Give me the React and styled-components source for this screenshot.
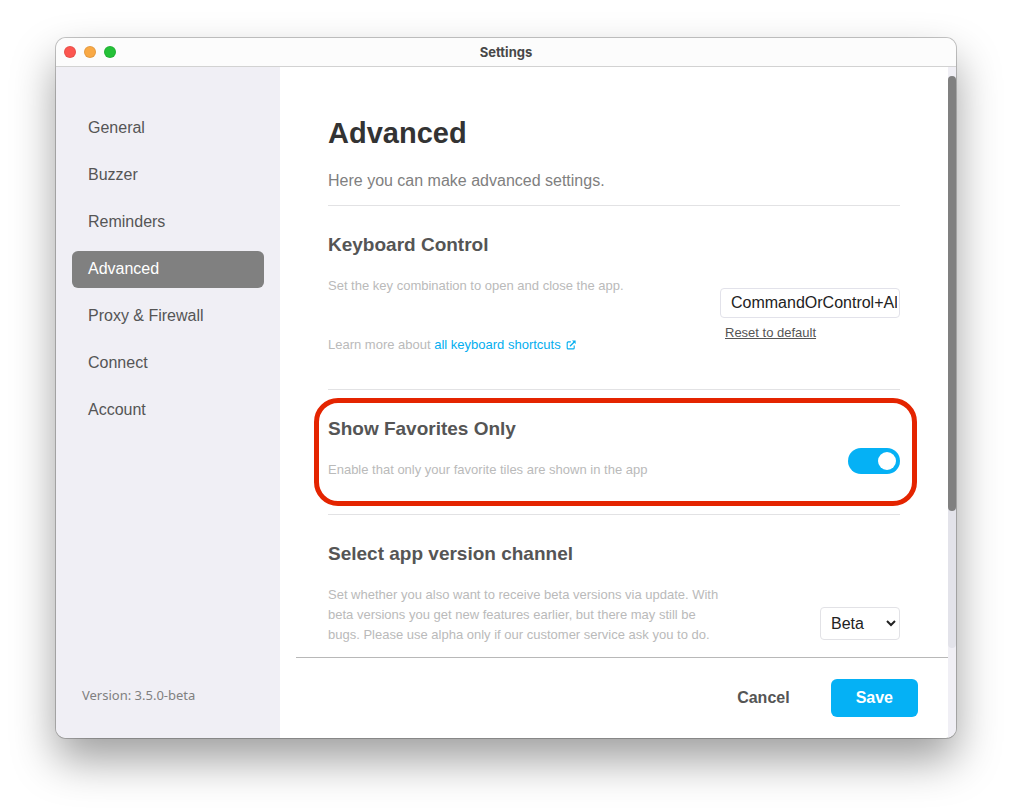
import React, { useState } from 'react'
import styled, { createGlobalStyle } from 'styled-components'

const GlobalStyle = createGlobalStyle`
  * {
    box-sizing: border-box;
  }
  body {
    margin: 0;
    background: #fff;
    font-family: 'Liberation Sans', Arial, sans-serif;
    font-size: 16px;
    color: #555;
  }
  button, input, select {
    font-family: inherit;
    font-size: inherit;
  }
`

const Desktop = styled.div`
  display: flex;
  height: 100vh;
  padding: 38px 56px 74px;
`

const Window = styled.div`
  flex: 1;
  display: flex;
  flex-direction: column;
  min-width: 0;
  overflow: hidden;
  background: #fff;
  border-radius: 10px;
  box-shadow: 0 0 0 1px rgba(0, 0, 0, 0.22), 0 22px 44px rgba(0, 0, 0, 0.38);
`

const TitleBar = styled.header`
  display: grid;
  grid-template-columns: 1fr auto 1fr;
  align-items: center;
  height: 29px;
  padding: 0 8px;
  background: #fcfcfc;
  border-bottom: 1px solid #d2d2d2;
`

const Lights = styled.div`
  display: flex;
  gap: 8px;
`

const Light = styled.button`
  width: 12px;
  height: 12px;
  padding: 0;
  border: 1px solid rgba(0, 0, 0, 0.08);
  border-radius: 50%;
  background: ${props => props.$color};
`

const WindowTitle = styled.div`
  font-family: Inter, sans-serif;
  font-size: 13px;
  font-weight: 700;
  line-height: 16px;
  color: #484848;
`

const Body = styled.div`
  flex: 1;
  display: grid;
  grid-template-columns: 224px 1fr 8px;
  min-height: 0;
`

const Sidebar = styled.aside`
  display: flex;
  flex-direction: column;
  justify-content: space-between;
  padding: 43px 16px 33px;
  background: #f0eff5;
`

const Nav = styled.nav`
  display: flex;
  flex-direction: column;
  gap: 10px;
`

const NavItem = styled.a`
  padding: 8px 16px 9px;
  border-radius: 6px;
  line-height: 20px;
  text-decoration: none;
  color: ${props => (props.$active ? '#fff' : '#555')};
  background: ${props => (props.$active ? '#808080' : 'transparent')};
`

const Version = styled.div`
  padding-left: 10px;
  font-family: 'Noto Sans', sans-serif;
  font-size: 13px;
  line-height: 20px;
  color: #808080;
`

const Main = styled.main`
  display: flex;
  flex-direction: column;
  min-width: 0;
  min-height: 0;
`

const Pane = styled.div`
  flex: 1;
  min-height: 0;
  padding: 49px 48px 0;
  overflow-y: auto;
  scrollbar-width: none;
`

const PageHead = styled.div`
  padding-bottom: 14px;
  border-bottom: 1px solid #e2e2e4;
`

const Title = styled.h1`
  margin: 0 0 21px;
  font-size: 29px;
  line-height: 34px;
  color: #333;
`

const Intro = styled.p`
  margin: 0;
  line-height: 20px;
  color: #808080;
`

const Section = styled.section`
  position: relative;
  display: grid;
  grid-template-columns: 1fr 180px;
  padding: 27px 0 34px;
  border-bottom: 1px solid #e2e2e4;
`

const SectionTitle = styled.h2`
  margin: 0 0 19px;
  font-size: 19px;
  line-height: 24px;
  color: #555;
`

const Description = styled.p`
  margin: 0;
  font-size: 13px;
  line-height: 20px;
  color: #bababa;
`

const LearnMore = styled(Description)`
  margin-top: 39px;
`

const DocsLink = styled.a`
  color: #03aeef;
  text-decoration: none;

  svg {
    margin-left: 5px;
    vertical-align: -1px;
  }
`

const Control = styled.div`
  display: flex;
  flex-direction: column;
  align-items: flex-end;
  justify-content: flex-end;
  padding-bottom: ${props => props.$bottom}px;
`

const ShortcutInput = styled.input`
  width: 100%;
  height: 30px;
  padding: 0 2px 0 10px;
  border: 1px solid #e2e2ea;
  border-radius: 4px;
  color: #222;
`

const ResetButton = styled.button`
  align-self: flex-start;
  margin: 5px 0 0 5px;
  padding: 0;
  border: 0;
  background: none;
  font-size: 13px;
  line-height: 20px;
  text-decoration: underline;
  color: #555;
`

const Toggle = styled.input`
  appearance: none;
  display: flex;
  width: 52px;
  height: 26px;
  margin: 0;
  padding: 4px;
  border-radius: 13px;
  justify-content: ${props => (props.checked ? 'flex-end' : 'flex-start')};
  background: ${props => (props.checked ? '#05b1f5' : '#c4c4c4')};

  &::before {
    content: '';
    width: 18px;
    height: 18px;
    border-radius: 50%;
    background: #fff;
  }
`

const Highlight = styled.div`
  position: absolute;
  inset: 8px -17px 8px -14px;
  border: 5px solid #e42400;
  border-radius: 24px;
  pointer-events: none;
`

const ChannelSelect = styled.select`
  width: 80px;
  height: 33px;
  padding: 0 0 0 6px;
  border: 1px solid #e2e2e6;
  border-radius: 4px;
  background: #fff;
  color: #222;
`

const Footer = styled.footer`
  display: flex;
  align-items: center;
  justify-content: flex-end;
  gap: 16px;
  height: 81px;
  margin-left: 16px;
  padding-right: 30px;
  border-top: 1px solid #b8b8b8;
`

const FooterButton = styled.button`
  height: 38px;
  padding: 0 25px;
  border: 0;
  border-radius: 6px;
  font-weight: bold;
  color: ${props => (props.$primary ? '#fff' : '#555')};
  background: ${props => (props.$primary ? '#05b1f5' : 'transparent')};
`

const ScrollGutter = styled.div`
  padding: 9px 0 90px;
  background: #f0eff5;
`

const ScrollTrack = styled.div`
  height: 100%;
  border-radius: 4px;
  background: #e3e3ea;
`

const ScrollThumb = styled.div`
  height: 76%;
  border-radius: 4px;
  background: #808080;
`

const ExternalIcon = () => (
  <svg width="10" height="10" viewBox="0 0 10 10" fill="none" stroke="currentColor" aria-hidden="true">
    <path d="M4.8 1.9H2.2a1 1 0 0 0-1 1v5a1 1 0 0 0 1 1h5a1 1 0 0 0 1-1V5.4" strokeWidth="1.1" />
    <path d="M4 6.2 8.2 2" strokeWidth="1.3" />
    <path d="M6 .4h3.6V4z" fill="currentColor" stroke="none" />
  </svg>
)

const pages = ['General', 'Buzzer', 'Reminders', 'Advanced', 'Proxy & Firewall', 'Connect', 'Account']

const App = () => {
  const [page, setPage] = useState('Advanced')
  const [shortcut, setShortcut] = useState('CommandOrControl+Alt')
  const [favoritesOnly, setFavoritesOnly] = useState(true)
  const [channel, setChannel] = useState('Beta')

  return (
    <Desktop>
      <GlobalStyle />
      <Window>
        <TitleBar>
          <Lights>
            <Light $color="#fc5650" aria-label="Close" />
            <Light $color="#f9a945" aria-label="Minimize" />
            <Light $color="#24c138" aria-label="Zoom" />
          </Lights>
          <WindowTitle>Settings</WindowTitle>
        </TitleBar>
        <Body>
          <Sidebar>
            <Nav>
              {pages.map(name => (
                <NavItem key={name} href="#" $active={name === page} onClick={() => setPage(name)}>
                  {name}
                </NavItem>
              ))}
            </Nav>
            <Version>Version: 3.5.0-beta</Version>
          </Sidebar>
          <Main>
            <Pane>
              <PageHead>
                <Title>Advanced</Title>
                <Intro>Here you can make advanced settings.</Intro>
              </PageHead>
              <Section>
                <div>
                  <SectionTitle id="shortcut-title">Keyboard Control</SectionTitle>
                  <Description>Set the key combination to open and close the app.</Description>
                  <LearnMore>
                    Learn more about{' '}
                    <DocsLink href="#">all keyboard shortcuts<ExternalIcon /></DocsLink>
                  </LearnMore>
                </div>
                <Control $bottom={12}>
                  <ShortcutInput
                    aria-labelledby="shortcut-title"
                    value={shortcut}
                    onChange={e => setShortcut(e.target.value)}
                  />
                  <ResetButton onClick={() => setShortcut('CommandOrControl+Alt')}>Reset to default</ResetButton>
                </Control>
              </Section>
              <Section>
                <div>
                  <SectionTitle id="favorites-title">Show Favorites Only</SectionTitle>
                  <Description>Enable that only your favorite tiles are shown in the app</Description>
                </div>
                <Control $bottom={6}>
                  <Toggle
                    type="checkbox"
                    aria-labelledby="favorites-title"
                    checked={favoritesOnly}
                    onChange={e => setFavoritesOnly(e.target.checked)}
                  />
                </Control>
                <Highlight />
              </Section>
              <Section>
                <div>
                  <SectionTitle id="channel-title">Select app version channel</SectionTitle>
                  <Description>
                    Set whether you also want to receive beta versions via update. With beta versions you get new
                    features earlier, but there may still be bugs. Please use alpha only if our customer service ask
                    you to do.
                  </Description>
                </div>
                <Control $bottom={5}>
                  <ChannelSelect
                    aria-labelledby="channel-title"
                    value={channel}
                    onChange={e => setChannel(e.target.value)}
                  >
                    <option>Beta</option>
                  </ChannelSelect>
                </Control>
              </Section>
            </Pane>
            <Footer>
              <FooterButton>Cancel</FooterButton>
              <FooterButton $primary>Save</FooterButton>
            </Footer>
          </Main>
          <ScrollGutter>
            <ScrollTrack>
              <ScrollThumb />
            </ScrollTrack>
          </ScrollGutter>
        </Body>
      </Window>
    </Desktop>
  )
}

export default App
